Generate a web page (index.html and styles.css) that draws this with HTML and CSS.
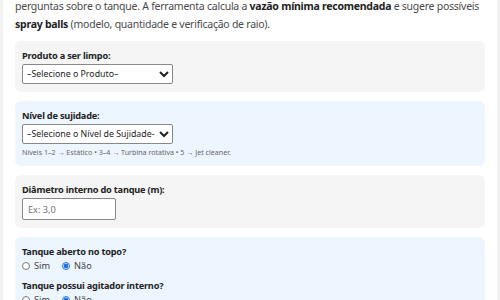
FILE: index.html
```html
<!DOCTYPE html>
<html lang="pt-BR">
<head>
    <meta charset="UTF-8">
    <meta name="viewport" content="width=device-width, initial-scale=1.0">
    <title>Calculadora de Spray Balls</title>
    <link rel="stylesheet" href="styles.css">
</head>
<body>

    <div class="container">
        <p class="intro">perguntas sobre o tanque. A ferramenta calcula a <strong>vazão mínima recomendada</strong> e sugere possíveis <strong>spray balls</strong> (modelo, quantidade e verificação de raio).</p>

        <div class="section">
            <label class="field-label" for="produto">Produto a ser limpo:</label>
            <select id="produto">
                <option>–Selecione o Produto–</option>
            </select>
        </div>

        <div class="section section-blue">
            <label class="field-label" for="sujidade">Nível de sujidade:</label>
            <select id="sujidade">
                <option>–Selecione o Nível de Sujidade-</option>
            </select>
            <div class="hint">Níveis 1–2 → Estático • 3–4 → Turbina rotativa • 5 → Jet cleaner.</div>
        </div>

        <div class="section">
            <label class="field-label" for="diametro">Diâmetro interno do tanque (m):</label>
            <input type="text" id="diametro" placeholder="Ex: 3,0">
        </div>

        <div class="section section-blue">
            <div class="field-label">Tanque aberto no topo?</div>
            <div class="radio-row">
                <label><input type="radio" name="aberto"> Sim</label>
                <label><input type="radio" name="aberto" checked> Não</label>
            </div>
            <div class="field-label">Tanque possui agitador interno?</div>
            <div class="radio-row">
                <label><input type="radio" name="agitador"> Sim</label>
                <label><input type="radio" name="agitador" checked> Não</label>
            </div>
        </div>
    </div>

</body>
</html>
```

FILE: styles.css
```css
body {
    font-family: "Noto Sans", "Open Sans", sans-serif;
    background-color: #f2f2f2;
    margin: 0;
    padding: 0 3px;
    color: #333;
}
.container {
    background: #fff;
    padding: 0 12px 20px;
}
.intro {
    margin: -3px 0 8px;
    font-size: 10.5px;
    letter-spacing: -0.25px;
    line-height: 18px;
    color: #4a4a4a;
}
.intro strong {
    color: #222;
}
.section {
    background: #f5f5f5;
    border-radius: 6px;
    padding: 8px 7px;
    margin-bottom: 9px;
}
.section-blue {
    background: #edf5ff;
}
.field-label {
    display: block;
    font-size: 9.2px;
    letter-spacing: -0.2px;
    line-height: 14px;
    font-weight: bold;
    color: #222;
    margin-bottom: 1px;
}
select {
    display: block;
    width: 151px;
    height: 20px;
    margin: 0;
    font-family: inherit;
    font-size: 8.8px;
    border: 1px solid #888;
    border-radius: 2px;
    background: #fff;
    color: #222;
    padding: 0;
}
input[type="text"] {
    display: block;
    width: 94px;
    height: 22px;
    margin: 0;
    box-sizing: border-box;
    font-family: inherit;
    font-size: 9.2px;
    border: 1px solid #888;
    border-radius: 2px;
    padding: 0 5px;
}
.hint {
    font-size: 7.1px;
    line-height: 11px;
    color: #666;
    margin-top: 3px;
}
.radio-row {
    display: flex;
    gap: 12px;
    font-size: 9.2px;
    line-height: 11px;
    color: #444;
    margin-bottom: 8px;
}
.radio-row label {
    display: flex;
    align-items: center;
    gap: 4px;
}
.radio-row input {
    width: 8px;
    height: 8px;
    margin: 0;
    accent-color: #1a73e8;
}
```
